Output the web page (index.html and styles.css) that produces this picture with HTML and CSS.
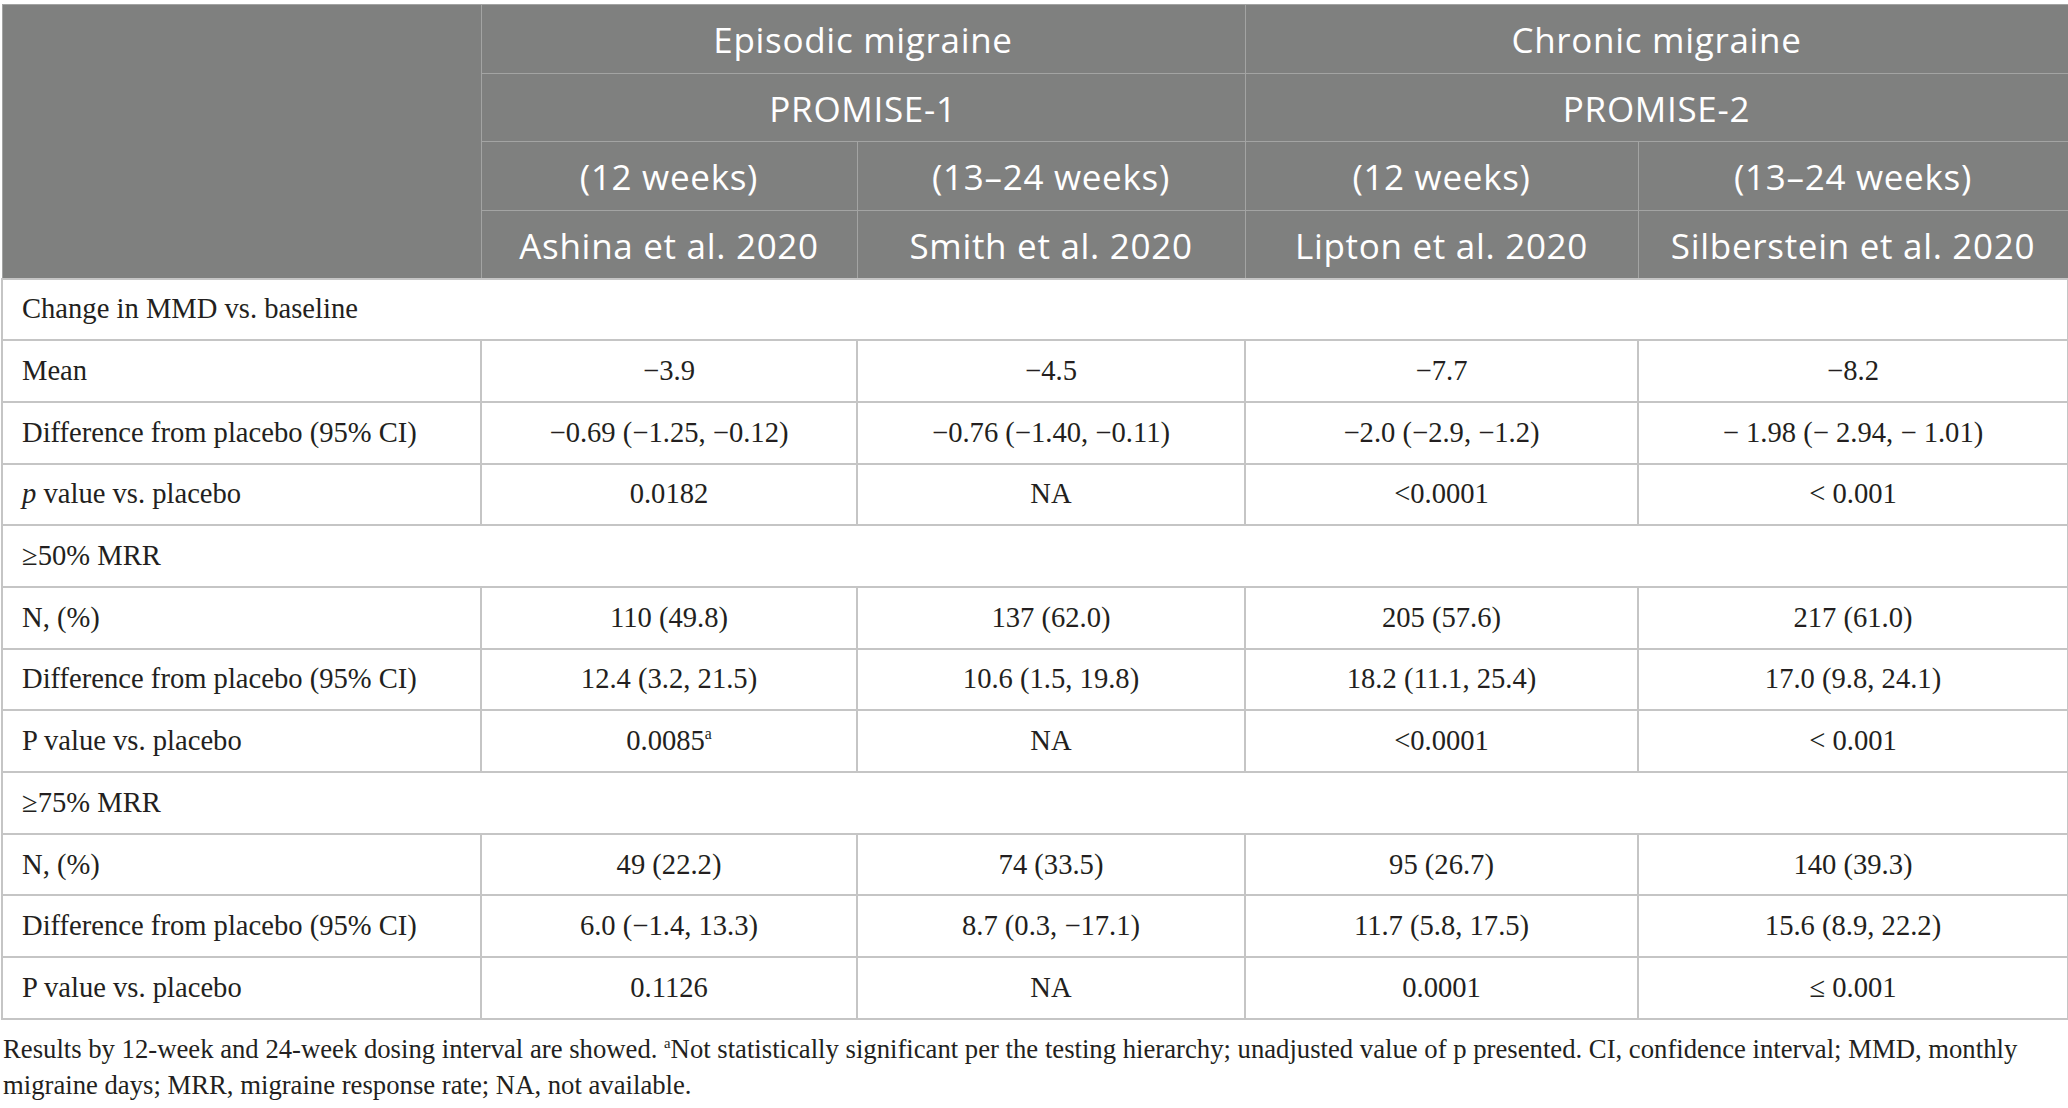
FILE: index.html
```html
<!DOCTYPE html>
<html lang="en">
<head>
    <meta charset="UTF-8">
    <meta name="viewport" content="width=device-width, initial-scale=1.0">
    <title>Galcanezumab trials</title>
    <link rel="stylesheet" href="styles.css">
</head>
<body>

    <table class="results">
        <colgroup>
            <col class="col-label">
            <col class="col-a">
            <col class="col-b">
            <col class="col-c">
            <col class="col-d">
        </colgroup>
        <thead>
            <tr>
                <th rowspan="4"></th>
                <th colspan="2">Episodic migraine</th>
                <th colspan="2">Chronic migraine</th>
            </tr>
            <tr>
                <th colspan="2">PROMISE-1</th>
                <th colspan="2">PROMISE-2</th>
            </tr>
            <tr>
                <th>(12 weeks)</th>
                <th>(13–24 weeks)</th>
                <th>(12 weeks)</th>
                <th>(13–24 weeks)</th>
            </tr>
            <tr>
                <th>Ashina et al. 2020</th>
                <th>Smith et al. 2020</th>
                <th>Lipton et al. 2020</th>
                <th>Silberstein et al. 2020</th>
            </tr>
        </thead>
        <tbody>
            <tr class="section">
                <td colspan="5">Change in MMD vs. baseline</td>
            </tr>
            <tr>
                <td>Mean</td>
                <td>−3.9</td>
                <td>−4.5</td>
                <td>−7.7</td>
                <td>−8.2</td>
            </tr>
            <tr>
                <td>Difference from placebo (95% CI)</td>
                <td>−0.69 (−1.25, −0.12)</td>
                <td>−0.76 (−1.40, −0.11)</td>
                <td>−2.0 (−2.9, −1.2)</td>
                <td>− 1.98 (− 2.94, − 1.01)</td>
            </tr>
            <tr>
                <td><i>p</i> value vs. placebo</td>
                <td>0.0182</td>
                <td>NA</td>
                <td>&lt;0.0001</td>
                <td>&lt; 0.001</td>
            </tr>
            <tr class="section">
                <td colspan="5">≥50% MRR</td>
            </tr>
            <tr>
                <td>N, (%)</td>
                <td>110 (49.8)</td>
                <td>137 (62.0)</td>
                <td>205 (57.6)</td>
                <td>217 (61.0)</td>
            </tr>
            <tr>
                <td>Difference from placebo (95% CI)</td>
                <td>12.4 (3.2, 21.5)</td>
                <td>10.6 (1.5, 19.8)</td>
                <td>18.2 (11.1, 25.4)</td>
                <td>17.0 (9.8, 24.1)</td>
            </tr>
            <tr>
                <td>P value vs. placebo</td>
                <td>0.0085<sup>a</sup></td>
                <td>NA</td>
                <td>&lt;0.0001</td>
                <td>&lt; 0.001</td>
            </tr>
            <tr class="section">
                <td colspan="5">≥75% MRR</td>
            </tr>
            <tr>
                <td>N, (%)</td>
                <td>49 (22.2)</td>
                <td>74 (33.5)</td>
                <td>95 (26.7)</td>
                <td>140 (39.3)</td>
            </tr>
            <tr>
                <td>Difference from placebo (95% CI)</td>
                <td>6.0 (−1.4, 13.3)</td>
                <td>8.7 (0.3, −17.1)</td>
                <td>11.7 (5.8, 17.5)</td>
                <td>15.6 (8.9, 22.2)</td>
            </tr>
            <tr>
                <td>P value vs. placebo</td>
                <td>0.1126</td>
                <td>NA</td>
                <td>0.0001</td>
                <td>≤ 0.001</td>
            </tr>
        </tbody>
    </table>

    <p class="footnote">Results by 12-week and 24-week dosing interval are showed. <sup>a</sup>Not statistically significant per the testing hierarchy; unadjusted value of p presented. CI, confidence interval; MMD, monthly migraine days; MRR, migraine response rate; NA, not available.</p>

</body>
</html>
```

FILE: styles.css
```css
body {
    margin: 0;
    padding: 4px 0 0 1px;
    background: #fff;
    color: #231f20;
    font-family: "Liberation Serif", "Times New Roman", serif;
}
.results {
    width: 2066px;
    table-layout: fixed;
    border-collapse: collapse;
}
.col-label { width: 479px; }
.col-a { width: 376px; }
.col-b { width: 388px; }
.col-c { width: 393px; }
.col-d { width: 430px; }
th {
    height: 68.5px;
    padding: 3px 8px 0;
    background-color: #7f807f;
    color: #fff;
    border: 1px solid #a3a4a3;
    font-family: "Open Sans", Lato, sans-serif;
    font-weight: normal;
    font-size: 35px;
    line-height: 40px;
    letter-spacing: 0.7px;
    text-align: center;
    vertical-align: middle;
    white-space: nowrap;
    box-sizing: border-box;
}
td {
    height: 59.7px;
    padding: 0 8px;
    border: 2px solid #c5c5c5;
    font-size: 28.6px;
    text-align: center;
    vertical-align: middle;
    white-space: nowrap;
}
td:first-child {
    text-align: left;
    padding-left: 19px;
}
sup {
    font-size: 0.55em;
    line-height: 0;
    vertical-align: 0.7em;
}
.footnote {
    margin: 11px 0 0;
    padding-left: 2px;
    width: 2060px;
    font-size: 26.7px;
    line-height: 36px;
}
```
